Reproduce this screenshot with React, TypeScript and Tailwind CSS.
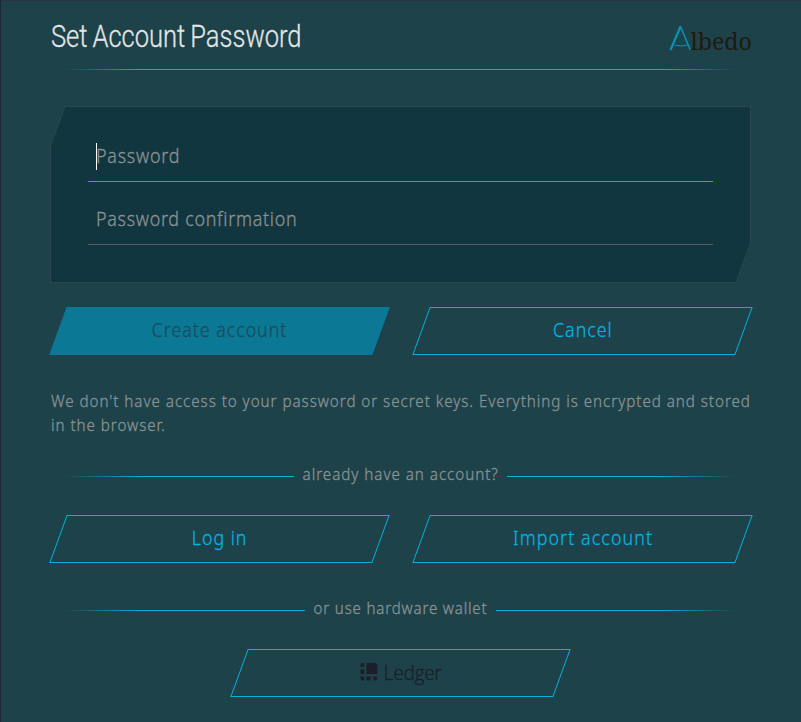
import type { ReactNode } from 'react';

function Rule({ side }: { side: 'left' | 'right' | 'both' }) {
  const shade = {
    left: 'bg-[linear-gradient(to_right,transparent_14px,#06b1e0_90px)]',
    right: 'bg-[linear-gradient(to_left,transparent_14px,#06b1e0_90px)]',
    both: 'bg-[linear-gradient(to_right,transparent_14px,#06b1e0_90px,#06b1e0_calc(100%-90px),transparent_calc(100%-14px))]',
  }[side];
  return <div className={`h-px min-w-0 flex-1 ${shade}`} />;
}

function Button({ children, filled = false }: { children: ReactNode; filled?: boolean }) {
  return (
    <button
      className={`h-12 w-[323px] shrink-0 -skew-x-[20deg] border pb-[2px] text-[20px] leading-[44px] ${
        filled ? 'border-[#0b7896] bg-[#0b7896] text-[#1a4d5b]' : 'border-[#06b1e0] text-[#06b1e0]'
      }`}
    >
      <span className="flex skew-x-[20deg] items-center justify-center">{children}</span>
    </button>
  );
}

function Text({ children, className = '' }: { children: ReactNode; className?: string }) {
  return (
    <span className={`inline-block whitespace-nowrap font-light [-webkit-text-stroke:0.3px_currentColor] ${className}`}>
      {children}
    </span>
  );
}

function AlbedoLogo() {
  return (
    <svg className="h-[38px] w-[88px] overflow-visible" viewBox="0 0 88 38" aria-label="Albedo">
      <path d="M1.5 30 11.5 6.5" stroke="#0d91b7" strokeWidth="2.2" fill="none" />
      <path d="M11.3 6 21.3 30" stroke="#0d91b7" strokeWidth="1.5" fill="none" />
      <path d="M5.5 25Q12 27 19 25" stroke="#0d91b7" strokeWidth="1" fill="none" />
      <text x="21.5" y="30" fontSize="24" textLength="61.5" lengthAdjust="spacingAndGlyphs" fill="#201b10" fontFamily="'Noto Serif', 'Liberation Serif', serif">lbedo</text>
    </svg>
  );
}

function LedgerLogo() {
  return (
    <svg className="h-[30px] w-[90px] overflow-visible" viewBox="0 0 90 30" aria-label="Ledger">
      <g fill="#1d1e2b">
        <path d="M10 6h8q3 0 3 3v8H10z" />
        <path d="M8 6v4H4V9q0-3 3-3zM4 12.5h4V17H4zM4 19.5h4v4H7q-3 0-3-3zM10 19.5h4.5v4H10zM17 19.5h4v1q0 3-3 3h-1z" />
      </g>
      <text x="27.5" y="23" fontSize="19.5" fontWeight="300" stroke="#1d1e2b" strokeWidth="0.4" textLength="58" lengthAdjust="spacingAndGlyphs" fill="#1d1e2b" fontFamily="'Open Sans', sans-serif">Ledger</text>
    </svg>
  );
}

export default function App() {
  return (
    <main className="flex h-[722px] w-[801px] flex-col overflow-hidden border-l border-t border-l-[#1b2832] border-t-[#2f3147] bg-[#1d424a] pl-[50px] pr-[51px] font-['Noto_Sans',sans-serif] text-[#8b9293]">
      <header className="flex h-[68px] items-start justify-between">
        <h1 className="pt-[18px] font-['Roboto',sans-serif] text-[31px] leading-[36px] text-[#e4e6e6]">
          <Text className="origin-left scale-x-[0.823] [word-spacing:-1.5px]">Set Account Password</Text>
        </h1>
        <div className="-mr-[7px] pt-[19px]"><AlbedoLogo /></div>
      </header>
      <div className="flex"><Rule side="both" /></div>

      <section className="-ml-px mt-9 h-[177px] w-[701px] shrink-0 bg-[#2b464e] p-px [clip-path:polygon(15px_0,100%_0,100%_137px,686px_100%,0_100%,0_39px)]">
        <div className="h-full bg-[#12363f] px-[37px] pt-5 text-[20px] [clip-path:polygon(14.5px_0,100%_0,100%_136px,684.5px_100%,0_100%,0_38.5px)]">
          <div className="flex h-[55px] w-[625px] items-center border-b border-[#06b1e0] pl-2 pt-1">
            <div className="h-[27px] w-px bg-white" />
            <Text className="-ml-[1.5px] origin-left scale-x-[0.895] tracking-[0.85px]">Password</Text>
          </div>
          <div className="flex h-[63px] w-[625px] items-center border-b border-[#555b60] pl-[7.5px] pt-3">
            <Text className="origin-left scale-x-[0.895] tracking-[0.8px]">Password confirmation</Text>
          </div>
        </div>
      </section>

      <div className="mt-6 flex gap-[40px] pl-[7px]">
        <Button filled><Text className="scale-x-[0.89] tracking-[1.1px]">Create account</Text></Button>
        <Button><Text className="scale-x-[0.89] tracking-[1.1px]">Cancel</Text></Button>
      </div>

      <p className="mt-[34px] h-12 text-[16.5px] leading-6">
        <Text className="origin-left scale-x-[0.919] tracking-[1.05px]">
          We don't have access to your password or secret keys. Everything is encrypted and stored<br />in the browser.
        </Text>
      </p>

      <div className="mt-[27px] flex h-6 items-center text-[16.5px]">
        <Rule side="left" />
        <div className="-mt-1 flex w-[213px] justify-center"><Text className="scale-x-[0.92] tracking-[1.05px]">already have an account?</Text></div>
        <Rule side="right" />
      </div>
      <div className="mt-[27px] flex gap-[40px] pl-[7px]">
        <Button><Text className="scale-x-[0.89] tracking-[1.1px]">Log in</Text></Button>
        <Button><Text className="scale-x-[0.89] tracking-[1.25px]">Import account</Text></Button>
      </div>

      <div className="mt-[35px] flex h-6 items-center text-[16.5px]">
        <Rule side="left" />
        <div className="-mt-1 flex w-[191px] justify-center"><Text className="scale-x-[0.91] tracking-[0.95px]">or use hardware wallet</Text></div>
        <Rule side="right" />
      </div>
      <div className="mt-[27px] flex justify-center pr-px">
        <Button><LedgerLogo /></Button>
      </div>
    </main>
  );
}
